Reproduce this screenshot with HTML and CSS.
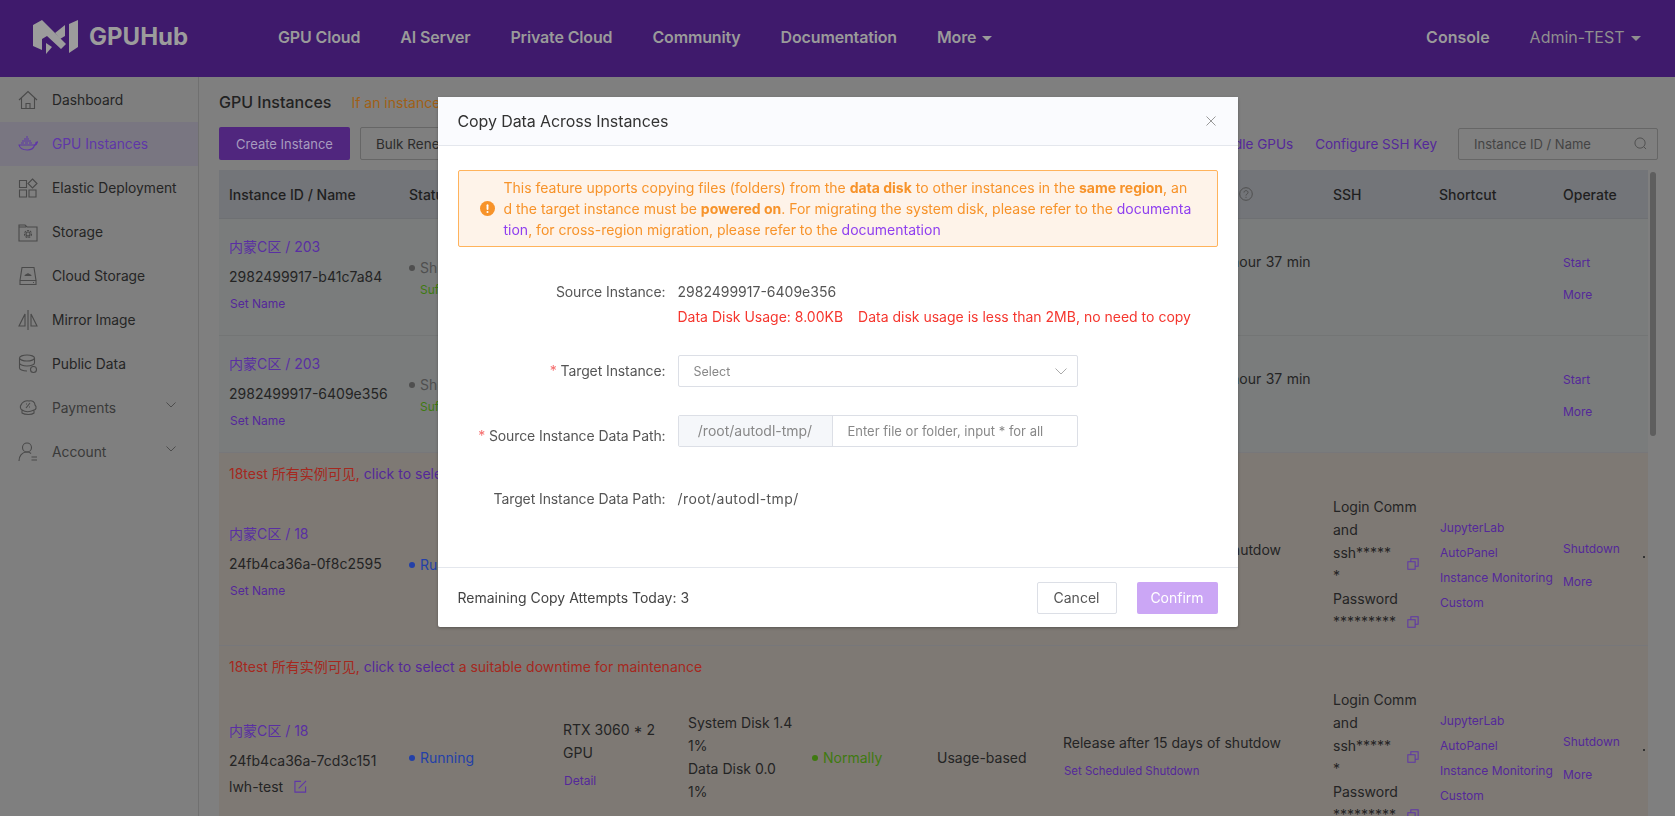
FILE: index.html
```html
<!DOCTYPE html>
<html lang="en">

<head>
    <meta charset="UTF-8">
    <title>GPU Instances</title>
    <link rel="stylesheet" href="styles.css">
</head>

<body>

    <header class="topbar">
        <div class="brand">
            <svg class="logo" viewBox="0 0 60 44" fill="#9c9c9c">
                <polygon points="5,10 14,5 38,29 33,34 19,21 14,24 14,35 5,31" />
                <polygon points="18,28 24,32 18,39" />
                <polygon points="37,10 37,21 32,24 27,18" />
                <polygon points="41,9 50,5 50,32 41,38" />
            </svg>
            <span class="brand_name">GPUHub</span>
        </div>
        <nav class="nav">
            <a>GPU Cloud</a>
            <a>AI Server</a>
            <a>Private Cloud</a>
            <a>Community</a>
            <a>Documentation</a>
            <a>More <i class="caret"></i></a>
        </nav>
        <div class="user">
            <a class="console">Console</a>
            <a class="admin">Admin-TEST <i class="caret"></i></a>
        </div>
    </header>

    <div class="main">
        <aside class="sidebar">
            <a class="side_item">
                <svg class="side_icon" viewBox="0 0 20 20"><path d="M1 10 10 1.500 19 10M3.500 8v10.500h13V8M8 18.500V13.500h4v5" /></svg>
                Dashboard
            </a>
            <a class="side_item active">
                <svg class="side_icon" viewBox="0 0 20 20"><path d="M1 11h15c1 0 2-1 2-2.500l1.500-.5c-.5 2-1.500 3-3 3.500-1 3-3.500 4.500-7 4.500-5 0-8-2-8.500-5.500zM3 9h3M7 9h3M11 9h3M4 7h9M6 5h5M8 3h2" /></svg>
                GPU Instances
            </a>
            <a class="side_item">
                <svg class="side_icon" viewBox="0 0 20 20"><path d="M1.500 2.500h7v7h-7zM14.500 1l4.500 4.500-4.500 4.500L10 5.500zM1.500 12h7v7h-7zM11 12h7v7h-7z" /></svg>
                Elastic Deployment
            </a>
            <a class="side_item">
                <svg class="side_icon" viewBox="0 0 20 20"><path d="M1 3h6l2 2h10v14H1zM1 5h7" /><circle cx="10" cy="12" r="2" /><circle cx="10" cy="12" r="3.500" stroke-dasharray="2 1" /></svg>
                Storage
            </a>
            <a class="side_item">
                <svg class="side_icon" viewBox="0 0 20 20"><path d="M4 1.500h12l2 13H2zM2 14.500v4h16v-4M15 16.500h1" /><path class="fill" d="M6.500 10c0-1 1-2 2-2 .500-1 2.500-1 3 0 1 0 2 1 2 2z" /></svg>
                Cloud Storage
            </a>
            <a class="side_item">
                <svg class="side_icon" viewBox="0 0 20 20"><path d="M10 0v20M7 4v12H1zM13 4v12h6z" /></svg>
                Mirror Image
            </a>
            <a class="side_item">
                <svg class="side_icon" viewBox="0 0 20 20"><ellipse cx="9" cy="4" rx="7.500" ry="3" /><path d="M1.500 4v10c0 1.500 3 3 7.500 3M1.500 9c0 1.500 3 3 7.500 3s7.500-1.500 7.500-3V4M1.500 14" /><circle cx="15.500" cy="15.500" r="3" /></svg>
                Public Data
            </a>
            <a class="side_item dim">
                <svg class="side_icon" viewBox="0 0 20 20"><path d="M3 7c1-3 5-5 8-4 3-1 6 1 6 4 2 2 1 5-1 5v3c-2 2-9 2-12 0v-3c-2-1-2-4-1-5zM4 12c3 2 8 2 12 0" /><path d="M8 10l4-5M8 6h1M11 9h1" /></svg>
                Payments
                <svg class="chev" viewBox="0 0 10 6"><path d="M.5.500 5 5 9.500.500" /></svg>
            </a>
            <a class="side_item dim">
                <svg class="side_icon" viewBox="0 0 20 20"><circle cx="9" cy="5.500" r="4.500" /><path d="M1 19c0-5 3-9 8-9 2 0 3 .5 4 1.500M13.500 15H19M13.500 18H19" /></svg>
                Account
                <svg class="chev" viewBox="0 0 10 6"><path d="M.5.500 5 5 9.500.500" /></svg>
            </a>
        </aside>

        <section class="content">
            <div class="title_row">
                <h2 class="page_title">GPU Instances</h2>
                <span class="title_tip">If an instance is idle for a long time, it may be released</span>
            </div>

            <div class="toolbar">
                <button class="btn_primary">Create Instance</button>
                <button class="btn_plain">Bulk Renew</button>
                <div class="tool_right">
                    <a class="link tool_link">Release Idle GPUs</a>
                    <a class="link tool_link">Configure SSH Key</a>
                    <div class="search">
                        <span>Instance ID / Name</span>
                        <svg class="search_icon" viewBox="0 0 14 14"><circle cx="6.500" cy="6.500" r="5.500" /><path d="M10.500 10.500 13 13" /></svg>
                    </div>
                </div>
            </div>

            <div class="table_box">
                <div class="grid_row thead">
                    <div>Instance ID / Name</div>
                    <div>Status</div>
                    <div>Spec</div>
                    <div>Usage</div>
                    <div>Health</div>
                    <div>Billing</div>
                    <div class="release_head">
                        <svg class="help" viewBox="0 0 14 14"><circle cx="7" cy="7" r="6.300" /><path d="M5 5.500c0-2.500 4-2.500 4 0 0 1.500-2 1.500-2 3M7 9.800v1" /></svg>
                    </div>
                    <div>SSH</div>
                    <div>Shortcut</div>
                    <div>Operate</div>
                </div>

                <!-- stopped instances -->
                <div class="grid_row tbody_row">
                    <div class="id_cell">
                        <a class="region">内蒙C区 / 203</a>
                        <p class="inst_id">2982499917-b41c7a84</p>
                        <a class="small_link set_name">Set Name</a>
                    </div>
                    <div class="status_cell">
                        <p class="st_gray"><i class="dot"></i>Shutdown</p>
                        <p class="st_green small">Sufficient GPUs</p>
                    </div>
                    <div></div><div></div><div></div><div></div>
                    <div class="release_cell">
                        <p class="release_long">Release after 14 days 22 hour 37 min</p>
                        <p class="blank_line"></p>
                    </div>
                    <div></div><div></div>
                    <div class="op_cell">
                        <a class="small_link">Start</a>
                        <a class="small_link">More</a>
                    </div>
                </div>

                <div class="grid_row tbody_row">
                    <div class="id_cell">
                        <a class="region">内蒙C区 / 203</a>
                        <p class="inst_id">2982499917-6409e356</p>
                        <a class="small_link set_name">Set Name</a>
                    </div>
                    <div class="status_cell">
                        <p class="st_gray"><i class="dot"></i>Shutdown</p>
                        <p class="st_green small">Sufficient GPUs</p>
                    </div>
                    <div></div><div></div><div></div><div></div>
                    <div class="release_cell">
                        <p class="release_long">Release after 14 days 22 hour 37 min</p>
                        <p class="blank_line"></p>
                    </div>
                    <div></div><div></div>
                    <div class="op_cell">
                        <a class="small_link">Start</a>
                        <a class="small_link">More</a>
                    </div>
                </div>

                <!-- running instances with a maintenance notice -->
                <div class="warm_row">
                    <p class="notice">18test 所有实例可见, <a class="link">click to select</a> a suitable downtime for maintenance</p>
                    <div class="grid_row warm_cells">
                        <div class="id_cell">
                            <a class="region">内蒙C区 / 18</a>
                            <p class="inst_id">24fb4ca36a-0f8c2595</p>
                            <a class="small_link set_name">Set Name</a>
                        </div>
                        <div><p class="st_blue"><i class="dot"></i>Running</p></div>
                        <div class="spec_cell"><p>RTX 3060 * 2<br>GPU</p><a class="small_link">Detail</a></div>
                        <div class="line_cell"><p>System Disk 1.4<br>1%</p><p>Data Disk 0.0<br>1%</p></div>
                        <div><p class="st_green"><i class="dot"></i>Normally</p></div>
                        <div>Usage-based</div>
                        <div class="release_cell">
                            <p>Release after 15 days of shutdow</p>
                            <a class="small_link sched_link">Set Scheduled Shutdown</a>
                        </div>
                        <div class="ssh_cell">
                            <p class="wrap_login">Login Command</p>
                            <div class="ssh_line">
                                <p class="wrap_ssh">ssh******</p>
                                <svg class="copy" viewBox="0 0 14 14"><path d="M1 4.500h8.500V13H1zM4.500 4.500V1H13v8.500H9.500" /></svg>
                            </div>
                            <p>Password</p>
                            <div class="ssh_line">
                                <p class="stars">*********</p>
                                <svg class="copy" viewBox="0 0 14 14"><path d="M1 4.500h8.500V13H1zM4.500 4.500V1H13v8.500H9.500" /></svg>
                            </div>
                        </div>
                        <div class="short_cell">
                            <a class="small_link">JupyterLab</a>
                            <a class="small_link">AutoPanel</a>
                            <a class="small_link">Instance Monitoring</a>
                            <a class="small_link">Custom</a>
                        </div>
                        <div class="op_cell">
                            <a class="small_link">Shutdown</a>
                            <a class="small_link">More</a>
                        </div>
                        <div class="tail_cell"><i class="tail_dot"></i></div>
                    </div>
                </div>

                <div class="warm_row">
                    <p class="notice">18test 所有实例可见, <a class="link">click to select</a> a suitable downtime for maintenance</p>
                    <div class="grid_row warm_cells">
                        <div class="id_cell">
                            <a class="region">内蒙C区 / 18</a>
                            <p class="inst_id">24fb4ca36a-7cd3c151</p>
                            <p class="inst_alias">lwh-test
                                <svg class="edit" viewBox="0 0 14 14"><path d="M12.500 7v6H1V1.500h6.500M5 9l8-8" /></svg>
                            </p>
                        </div>
                        <div><p class="st_blue"><i class="dot"></i>Running</p></div>
                        <div class="spec_cell"><p>RTX 3060 * 2<br>GPU</p><a class="small_link">Detail</a></div>
                        <div class="line_cell"><p>System Disk 1.4<br>1%</p><p>Data Disk 0.0<br>1%</p></div>
                        <div><p class="st_green"><i class="dot"></i>Normally</p></div>
                        <div>Usage-based</div>
                        <div class="release_cell">
                            <p>Release after 15 days of shutdow</p>
                            <a class="small_link sched_link">Set Scheduled Shutdown</a>
                        </div>
                        <div class="ssh_cell">
                            <p class="wrap_login">Login Command</p>
                            <div class="ssh_line">
                                <p class="wrap_ssh">ssh******</p>
                                <svg class="copy" viewBox="0 0 14 14"><path d="M1 4.500h8.500V13H1zM4.500 4.500V1H13v8.500H9.500" /></svg>
                            </div>
                            <p>Password</p>
                            <div class="ssh_line">
                                <p class="stars">*********</p>
                                <svg class="copy" viewBox="0 0 14 14"><path d="M1 4.500h8.500V13H1zM4.500 4.500V1H13v8.500H9.500" /></svg>
                            </div>
                        </div>
                        <div class="short_cell">
                            <a class="small_link">JupyterLab</a>
                            <a class="small_link">AutoPanel</a>
                            <a class="small_link">Instance Monitoring</a>
                            <a class="small_link">Custom</a>
                        </div>
                        <div class="op_cell">
                            <a class="small_link">Shutdown</a>
                            <a class="small_link">More</a>
                        </div>
                        <div class="tail_cell"><i class="tail_dot"></i></div>
                    </div>
                </div>
            </div>

            <div class="scroll_thumb"></div>
        </section>
    </div>

    <!-- popover -->
    <div class="modal_wrap">
        <div class="modal">
            <div class="modal_head">
                <span class="modal_title">Copy Data Across Instances</span>
                <svg class="modal_close" viewBox="0 0 10 10"><path d="M.5.500l9 9M9.500.500l-9 9" /></svg>
            </div>

            <div class="modal_body">
                <div class="alert">
                    <svg class="alert_icon" viewBox="0 0 16 16">
                        <circle cx="8" cy="8" r="8" fill="#f7932a" />
                        <rect x="7" y="3.500" width="2" height="6" rx="1" fill="#fff" />
                        <circle cx="8" cy="11.700" r="1.100" fill="#fff" />
                    </svg>
                    <p class="alert_text">This feature upports copying files (folders) from the <b>data disk</b> to other instances in the <b>same region</b>, and the target instance must be <b>powered on</b>. For migrating the system disk, please refer to the <a class="alert_link">documentation</a>, for cross-region migration, please refer to the <a class="alert_link">documentation</a></p>
                </div>

                <div class="form_row first_row">
                    <label class="form_label">Source Instance:</label>
                    <div>
                        <p class="form_value">2982499917-6409e356</p>
                        <p class="form_error">Data Disk Usage: 8.00KB<span class="err_gap"></span>Data disk usage is less than 2MB, no need to copy</p>
                    </div>
                </div>

                <div class="form_row select_row">
                    <label class="form_label"><i class="req">*</i> Target Instance:</label>
                    <div class="select">
                        <span>Select</span>
                        <svg class="select_arrow" viewBox="0 0 12 7"><path d="M.5.500 6 6 11.500.500" /></svg>
                    </div>
                </div>

                <div class="form_row path_row">
                    <label class="form_label low_label"><i class="req">*</i> Source Instance Data Path:</label>
                    <div class="path_input">
                        <span class="path_prefix">/root/autodl-tmp/</span>
                        <span class="path_hint">Enter file or folder, input * for all</span>
                    </div>
                </div>

                <div class="form_row last_row">
                    <label class="form_label">Target Instance Data Path:</label>
                    <p class="form_value path_value">/root/autodl-tmp/</p>
                </div>
            </div>

            <div class="modal_foot">
                <span class="attempts">Remaining Copy Attempts Today: 3</span>
                <div class="foot_btns">
                    <button class="btn_cancel">Cancel</button>
                    <button class="btn_confirm">Confirm</button>
                </div>
            </div>
        </div>
    </div>

</body>

</html>
```
FILE: styles.css
```css
* {
    box-sizing: border-box;
    font-family: Inter, "Noto Sans CJK SC", sans-serif;
}

html,
body {
    margin: 0;
    height: 100%;
    overflow: hidden;
}

body {
    display: flex;
    flex-direction: column;
    background-color: #7f7f7f;
    color: #242424;
    font-size: 14px;
}

p {
    margin: 0;
}

i {
    font-style: normal;
}

/* top bar */
.topbar {
    display: flex;
    align-items: center;
    flex: none;
    height: 77px;
    background-color: #3f1a6c;
    color: #9a9a9a;
    padding-left: 28px;
    padding-bottom: 4px;
}

.brand {
    display: flex;
    align-items: center;
    width: 250px;
}

.logo {
    width: 60px;
    height: 44px;
    margin-right: 1px;
}

.brand_name {
    font-size: 24px;
    font-weight: 700;
    color: #9c9c9c;
}

.nav {
    display: flex;
    gap: 40px;
    font-size: 16px;
    font-weight: 600;
    letter-spacing: -0.15px;
}

.user {
    display: flex;
    align-items: center;
    margin-left: auto;
    margin-right: 34px;
    font-size: 16px;
}

.console {
    font-weight: 600;
    margin-right: 40px;
}

.admin {
    color: #8f8f8f;
}

.caret {
    display: inline-block;
    border: 5px solid transparent;
    border-top-color: currentColor;
    border-bottom-width: 0;
    margin-left: 2px;
    vertical-align: middle;
}

/* sidebar */
.main {
    display: flex;
    flex: 1;
    min-height: 0;
}

.sidebar {
    flex: none;
    width: 199px;
    border-right: 1px solid #707070;
    padding-top: 1px;
    font-size: 13.8px;
}

.side_item {
    display: flex;
    align-items: center;
    height: 44px;
    padding-left: 18px;
    color: #252525;
}

.side_item.active {
    background-color: #797681;
    color: #5f36a8;
}

.side_item.dim {
    color: #3a3a3a;
}

.side_icon {
    width: 20px;
    height: 20px;
    margin-right: 14px;
    fill: none;
    stroke: #4a4a4a;
    stroke-width: 1.1;
}

.side_item.active .side_icon {
    stroke: #5f36a8;
}

.side_icon .fill {
    fill: #4a4a4a;
    stroke: none;
}

.chev {
    width: 10px;
    height: 6px;
    margin-left: auto;
    margin-right: 22px;
    margin-bottom: 6px;
    fill: none;
    stroke: #4d4d4d;
}

/* content */
.content {
    position: relative;
    flex: 1;
    min-width: 0;
    padding: 13px 17px 0 20px;
}

.title_row {
    display: flex;
    align-items: center;
    height: 24px;
}

.page_title {
    margin: 0;
    font-size: 16px;
    font-weight: 500;
    color: #222;
}

.title_tip {
    margin-left: 20px;
    color: #a05f15;
}

.toolbar {
    display: flex;
    align-items: center;
    height: 33px;
    margin-top: 13px;
}

.btn_primary {
    width: 131px;
    height: 33px;
    border: none;
    border-radius: 2px;
    background-color: #50267e;
    color: #a79bbf;
    font-size: 13px;
}

.btn_plain {
    width: 110px;
    height: 33px;
    margin-left: 10px;
    padding: 0 0 0 15px;
    border: 1px solid #666;
    border-radius: 2px;
    background: none;
    color: #2c2c2c;
    font-size: 13.5px;
    text-align: left;
}

.tool_right {
    display: flex;
    align-items: center;
    gap: 22px;
    margin-left: auto;
}

.link {
    color: #54289a;
}

.tool_link {
    font-size: 13.5px;
}

.search {
    display: flex;
    align-items: center;
    justify-content: space-between;
    width: 200px;
    height: 32px;
    margin-left: -1px;
    border: 1px solid #666;
    border-radius: 2px;
    padding: 0 10px 0 15px;
    color: #444;
    font-size: 13px;
}

.search_icon {
    width: 13px;
    height: 13px;
    fill: none;
    stroke: #4e4e4e;
}

/* table */
.table_box {
    width: 1429px;
    margin-top: 10px;
    overflow: hidden;
}

.grid_row {
    display: grid;
    grid-template-columns: 180px 154px 125px 124px 125px 126px 270px 106px 124px 80px 60px;
    align-items: center;
    width: 1489px;
}

.grid_row > div {
    padding-left: 10px;
}

.thead {
    height: 49px;
    background-color: #737579;
    border-bottom: 1px solid #6e7073;
    font-weight: 500;
    color: #1f1f1f;
}

.thead > .release_head {
    display: flex;
    align-items: center;
    padding-left: 186px;
}

.help {
    width: 14px;
    height: 14px;
    fill: none;
    stroke: #4f4f4f;
}

.tbody_row {
    height: 117px;
    padding-top: 2px;
    background-color: #7a7c7c;
    border-bottom: 1px solid #737575;
}

.warm_row {
    background-color: #7e7974;
    box-shadow: 0 -1px 0 #77777a;
}

.notice {
    padding: 9px 10px 0;
    line-height: 24px;
    color: #a5281e;
}

.warm_cells {
    padding: 9px 0 13px;
}

.warm_cells .id_cell {
    padding-top: 2px;
}

.region {
    display: block;
    line-height: 24px;
    margin-bottom: 6px;
    color: #592fa3;
}

.inst_id {
    line-height: 24px;
    margin-bottom: 3px;
}

.inst_alias {
    display: flex;
    align-items: center;
    gap: 11px;
    line-height: 22px;
}

.small_link {
    display: block;
    font-size: 12px;
    line-height: 24px;
    color: #54289a;
}

.sched_link {
    font-size: 11.4px;
}

.set_name {
    margin-bottom: 5px;
    padding-left: 1px;
}

.edit {
    width: 13px;
    height: 13px;
    fill: none;
    stroke: #5f36a8;
    stroke-width: 1.2;
}

.status_cell .small {
    font-size: 12px;
    margin-top: 6px;
    padding-left: 11px;
}

.dot {
    display: inline-block;
    width: 6px;
    height: 6px;
    border-radius: 50%;
    background-color: currentColor;
    margin-right: 5px;
    vertical-align: 2px;
}

.st_gray {
    color: #4f4f4f;
}

.st_green {
    color: #3f7a10;
}

.st_blue {
    color: #2340a8;
}

.grid_row > .spec_cell {
    padding-bottom: 3px;
    line-height: 23px;
}

.spec_cell .small_link {
    margin-top: 5px;
    padding-left: 1px;
}

.line_cell {
    line-height: 23px;
    white-space: nowrap;
}

.release_cell p {
    line-height: 24px;
    white-space: nowrap;
    margin-bottom: 4px;
}

.release_cell .release_long {
    word-spacing: 0.5px;
}

.release_cell .blank_line {
    height: 24px;
}

.release_cell .small_link {
    padding-left: 1px;
}

.ssh_cell {
    line-height: 23px;
}

.ssh_line {
    display: flex;
    align-items: center;
    justify-content: space-between;
}

.wrap_login {
    width: 90px;
    word-break: break-all;
}

.wrap_ssh {
    width: 60px;
    word-break: break-all;
}

.stars {
    white-space: nowrap;
}

.copy {
    flex: none;
    width: 12px;
    height: 12px;
    margin-right: 10px;
    fill: none;
    stroke: #5f36a8;
    stroke-width: 1.2;
}

.grid_row > .short_cell {
    padding-left: 11px;
    padding-top: 2px;
}

.short_cell .small_link {
    line-height: 25px;
    white-space: nowrap;
}

.grid_row > .op_cell {
    padding-top: 2px;
}

.warm_cells .op_cell .small_link + .small_link {
    margin-top: 9px;
}

.op_cell .small_link + .small_link {
    margin-top: 8px;
}

.tail_dot {
    display: block;
    width: 2px;
    height: 2px;
    margin-bottom: 14px;
    background-color: #333;
}

.scroll_thumb {
    position: absolute;
    top: 95px;
    right: 19px;
    width: 6px;
    height: 264px;
    border-radius: 3px;
    background-color: #5e5e5e;
}

/* modal */
.modal_wrap {
    position: fixed;
    top: 0;
    left: 0;
    width: 100%;
    height: 100%;
    display: flex;
    justify-content: center;
    align-items: flex-start;
    padding-top: 97px;
}

.modal {
    width: 800px;
    background-color: white;
    border-radius: 2px;
    box-shadow: 0 1px 3px rgba(0, 0, 0, 0.3);
    color: #555;
}

.modal_head {
    display: flex;
    align-items: center;
    justify-content: space-between;
    height: 49px;
    padding: 0 22px 0 20px;
    background-color: #fafbfe;
    border-bottom: 1px solid #e4e7ed;
}

.modal_title {
    font-size: 16px;
    letter-spacing: -0.1px;
    color: #333;
}

.modal_close {
    width: 10px;
    height: 10px;
    fill: none;
    stroke: #999;
}

.modal_body {
    padding: 24px 20px 56px;
}

.alert {
    display: flex;
    align-items: center;
    height: 77px;
    padding-left: 21px;
    background-color: #fef3e9;
    border: 1px solid #ffb35c;
    border-radius: 2px;
    color: #f7932a;
}

.alert_icon {
    flex: none;
    width: 15px;
    height: 15px;
    margin-right: 9px;
}

.alert_text {
    width: 692px;
    line-height: 21px;
    word-break: break-all;
}

.alert_link {
    color: #8f3fef;
}

.form_row {
    display: flex;
    margin-bottom: 28px;
}

.first_row {
    margin-top: 33px;
    margin-bottom: 26px;
}

.select_row {
    align-items: center;
}

.path_row {
    margin-bottom: 39px;
}

.last_row {
    margin-bottom: 0;
}

.form_label {
    flex: none;
    width: 208px;
    margin-right: 12px;
    text-align: right;
    line-height: 24px;
    white-space: nowrap;
    letter-spacing: -0.1px;
}

.low_label {
    padding-top: 9px;
}

.req {
    color: #f56c6c;
}

.form_value {
    line-height: 24px;
}

.path_value {
    letter-spacing: 0.4px;
}

.form_error {
    margin-top: 1px;
    line-height: 24px;
    color: #f5362e;
    white-space: nowrap;
}

.err_gap {
    display: inline-block;
    width: 15px;
}

.select {
    display: flex;
    align-items: center;
    justify-content: space-between;
    width: 400px;
    height: 32px;
    padding: 0 10px 0 15px;
    border: 1px solid #dcdfe6;
    border-radius: 2px;
    color: #888;
    font-size: 12.5px;
}

.select_arrow {
    width: 12px;
    height: 7px;
    fill: none;
    stroke: #aaa;
}

.path_input {
    display: flex;
    width: 400px;
    height: 32px;
    border: 1px solid #dcdfe6;
    border-radius: 2px;
    line-height: 30px;
}

.path_prefix {
    width: 154px;
    background-color: #f5f7fa;
    border-right: 1px solid #dcdfe6;
    text-align: center;
    color: #888;
    font-size: 14px;
}

.path_hint {
    padding-left: 15px;
    color: #888;
    font-size: 13px;
}

.modal_foot {
    display: flex;
    align-items: center;
    justify-content: space-between;
    height: 60px;
    padding: 0 20px;
    border-top: 1px solid #e4e7ed;
}

.attempts {
    color: #444;
}

.foot_btns {
    display: flex;
    gap: 20px;
}

.btn_cancel,
.btn_confirm {
    height: 32px;
    border-radius: 2px;
    font-size: 14px;
}

.btn_cancel {
    width: 80px;
    background-color: white;
    border: 1px solid #dcdfe6;
    color: #555;
}

.btn_confirm {
    width: 81px;
    background-color: #cba6f5;
    border: none;
    color: white;
}
```
